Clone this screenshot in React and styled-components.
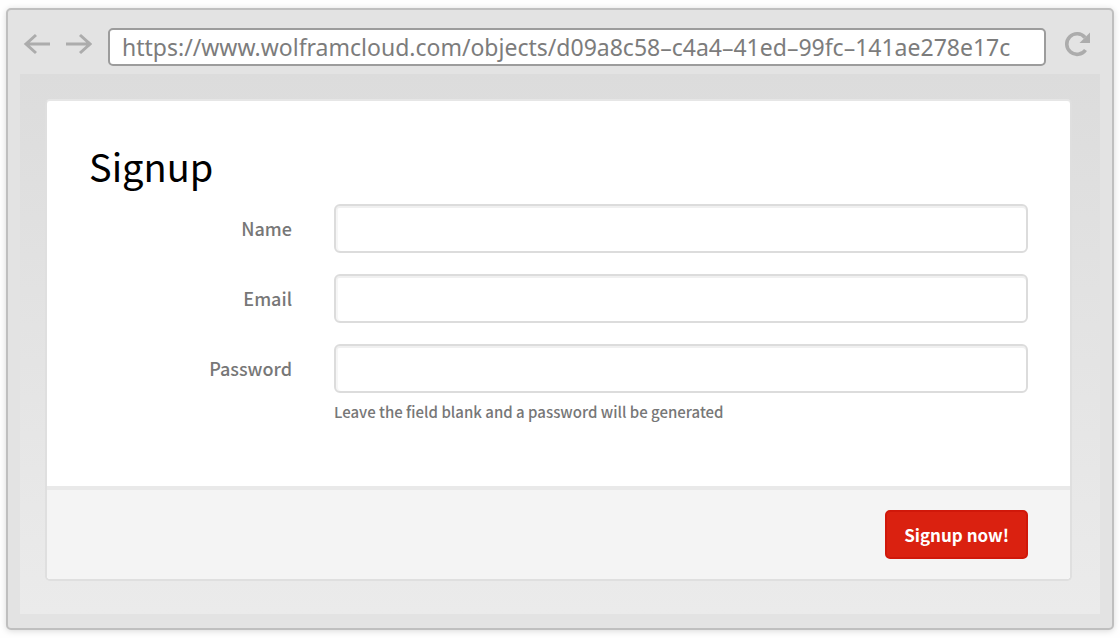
import React from 'react'
import styled, { createGlobalStyle } from 'styled-components'

const GlobalStyle = createGlobalStyle`
  *, *::before, *::after {
    box-sizing: border-box;
  }
  body {
    margin: 0;
    background: #fefefe;
    font-family: 'Noto Sans CJK SC', 'Open Sans', sans-serif;
  }
`

// Browser window
const Browser = styled.div`
  margin: 8px 6px;
  padding: 0 12px 14px;
  border: 2px solid #bfbfbf;
  border-radius: 5px;
  background: #e3e3e3;
  box-shadow: 0 1px 6px rgba(0, 0, 0, 0.15);
`

const Toolbar = styled.div`
  display: flex;
  align-items: center;
  gap: 12px;
  height: 64px;
  padding: 10px 8px 0 0;
`

const NavButton = styled.button`
  display: flex;
  padding: 0;
  border: 0;
  background: none;
  color: #acacac;
  margin: 0 0 6px;
`

const Address = styled.input`
  flex: 1;
  min-width: 0;
  height: 38px;
  margin: 0 6px 0 4px;
  padding: 0 12px;
  border: 2px solid #9c9c9c;
  border-radius: 5px;
  background: #fff;
  color: #7c7c7c;
  font-family: 'Noto Sans', 'Open Sans', sans-serif;
  font-size: 23px;
`

// Page
const Viewport = styled.main`
  padding: 25px 28px 33px 25px;
  background: linear-gradient(#dcdcdc, #ebebeb);
`

const Card = styled.form`
  border: 2px solid #dfdfdf;
  border-top-color: #e6e6e6;
  border-radius: 5px;
  background: #fff;
`

const CardBody = styled.div`
  padding: 35px 42px 60px;
`

const Title = styled.h1`
  margin: 0 0 8px;
  font-size: 38px;
  line-height: 60px;
  font-weight: 400;
  color: #000;
`

const Field = styled.div`
  display: grid;
  grid-template-columns: 203px 1fr;
  column-gap: 42px;
  & + & {
    margin-top: 21px;
  }
`

const Label = styled.label`
  text-align: right;
  font-size: 18px;
  line-height: 49px;
  font-weight: 500;
  color: #777;
`

const TextInput = styled.input`
  display: block;
  width: 100%;
  height: 49px;
  padding: 0 16px;
  border: 2px solid #dcdcdc;
  border-radius: 6px;
  background: #fff;
  box-shadow: inset 0 2px 0 #f0f0f0, inset 2px 0 0 #f6f6f6;
  font: inherit;
  font-size: 18px;
`

const Hint = styled.p`
  margin: 5px 0 0;
  font-size: 15px;
  line-height: 28px;
  font-weight: 500;
  color: #777;
`

const CardFooter = styled.footer`
  display: flex;
  justify-content: flex-end;
  padding: 20px 42px;
  border-top: 4px solid #e9e9e9;
  border-radius: 0 0 4px 4px;
  background: #f4f4f4;
`

const SubmitButton = styled.button`
  height: 49px;
  padding: 0 17px;
  border: 2px solid #d0180a;
  border-radius: 5px;
  background: #da2110;
  color: #fff;
  font: inherit;
  font-size: 17px;
  font-weight: 700;
`

const ArrowIcon = ({ d }) => (
  <svg width="30" height="24" viewBox="0 0 30 24" fill="none" stroke="currentColor" strokeWidth="3">
    <path d={d} />
  </svg>
)

const ReloadIcon = () => (
  <svg width="28" height="28" viewBox="0 0 28 28" fill="none">
    <path d="M21.5 20A10.3 10.3 0 1 1 21 7.5" stroke="currentColor" strokeWidth="3.6" />
    <path d="M26 2.5V13H15.5Z" fill="currentColor" />
  </svg>
)

const fields = [
  { id: 'name', label: 'Name', type: 'text' },
  { id: 'email', label: 'Email', type: 'email' },
  {
    id: 'password',
    label: 'Password',
    type: 'password',
    hint: 'Leave the field blank and a password will be generated',
  },
]

const App = () => (
  <>
    <GlobalStyle />
    <Browser>
      <Toolbar>
        <NavButton type="button" aria-label="Back">
          <ArrowIcon d="M30 12H6M16 3L6 12L16 21" />
        </NavButton>
        <NavButton type="button" aria-label="Forward">
          <ArrowIcon d="M4 12H28M18 3L28 12L18 21" />
        </NavButton>
        <Address
          type="text"
          aria-label="Address"
          defaultValue="https://www.wolframcloud.com/objects/d09a8c58–c4a4–41ed–99fc–141ae278e17c"
        />
        <NavButton type="button" aria-label="Reload">
          <ReloadIcon />
        </NavButton>
      </Toolbar>
      <Viewport>
        <Card>
          <CardBody>
            <Title>Signup</Title>
            {fields.map(({ id, label, type, hint }) => (
              <Field key={id}>
                <Label htmlFor={id}>{label}</Label>
                <div>
                  <TextInput id={id} name={id} type={type} />
                  {hint && <Hint>{hint}</Hint>}
                </div>
              </Field>
            ))}
          </CardBody>
          <CardFooter>
            <SubmitButton type="submit">Signup now!</SubmitButton>
          </CardFooter>
        </Card>
      </Viewport>
    </Browser>
  </>
)

export default App
